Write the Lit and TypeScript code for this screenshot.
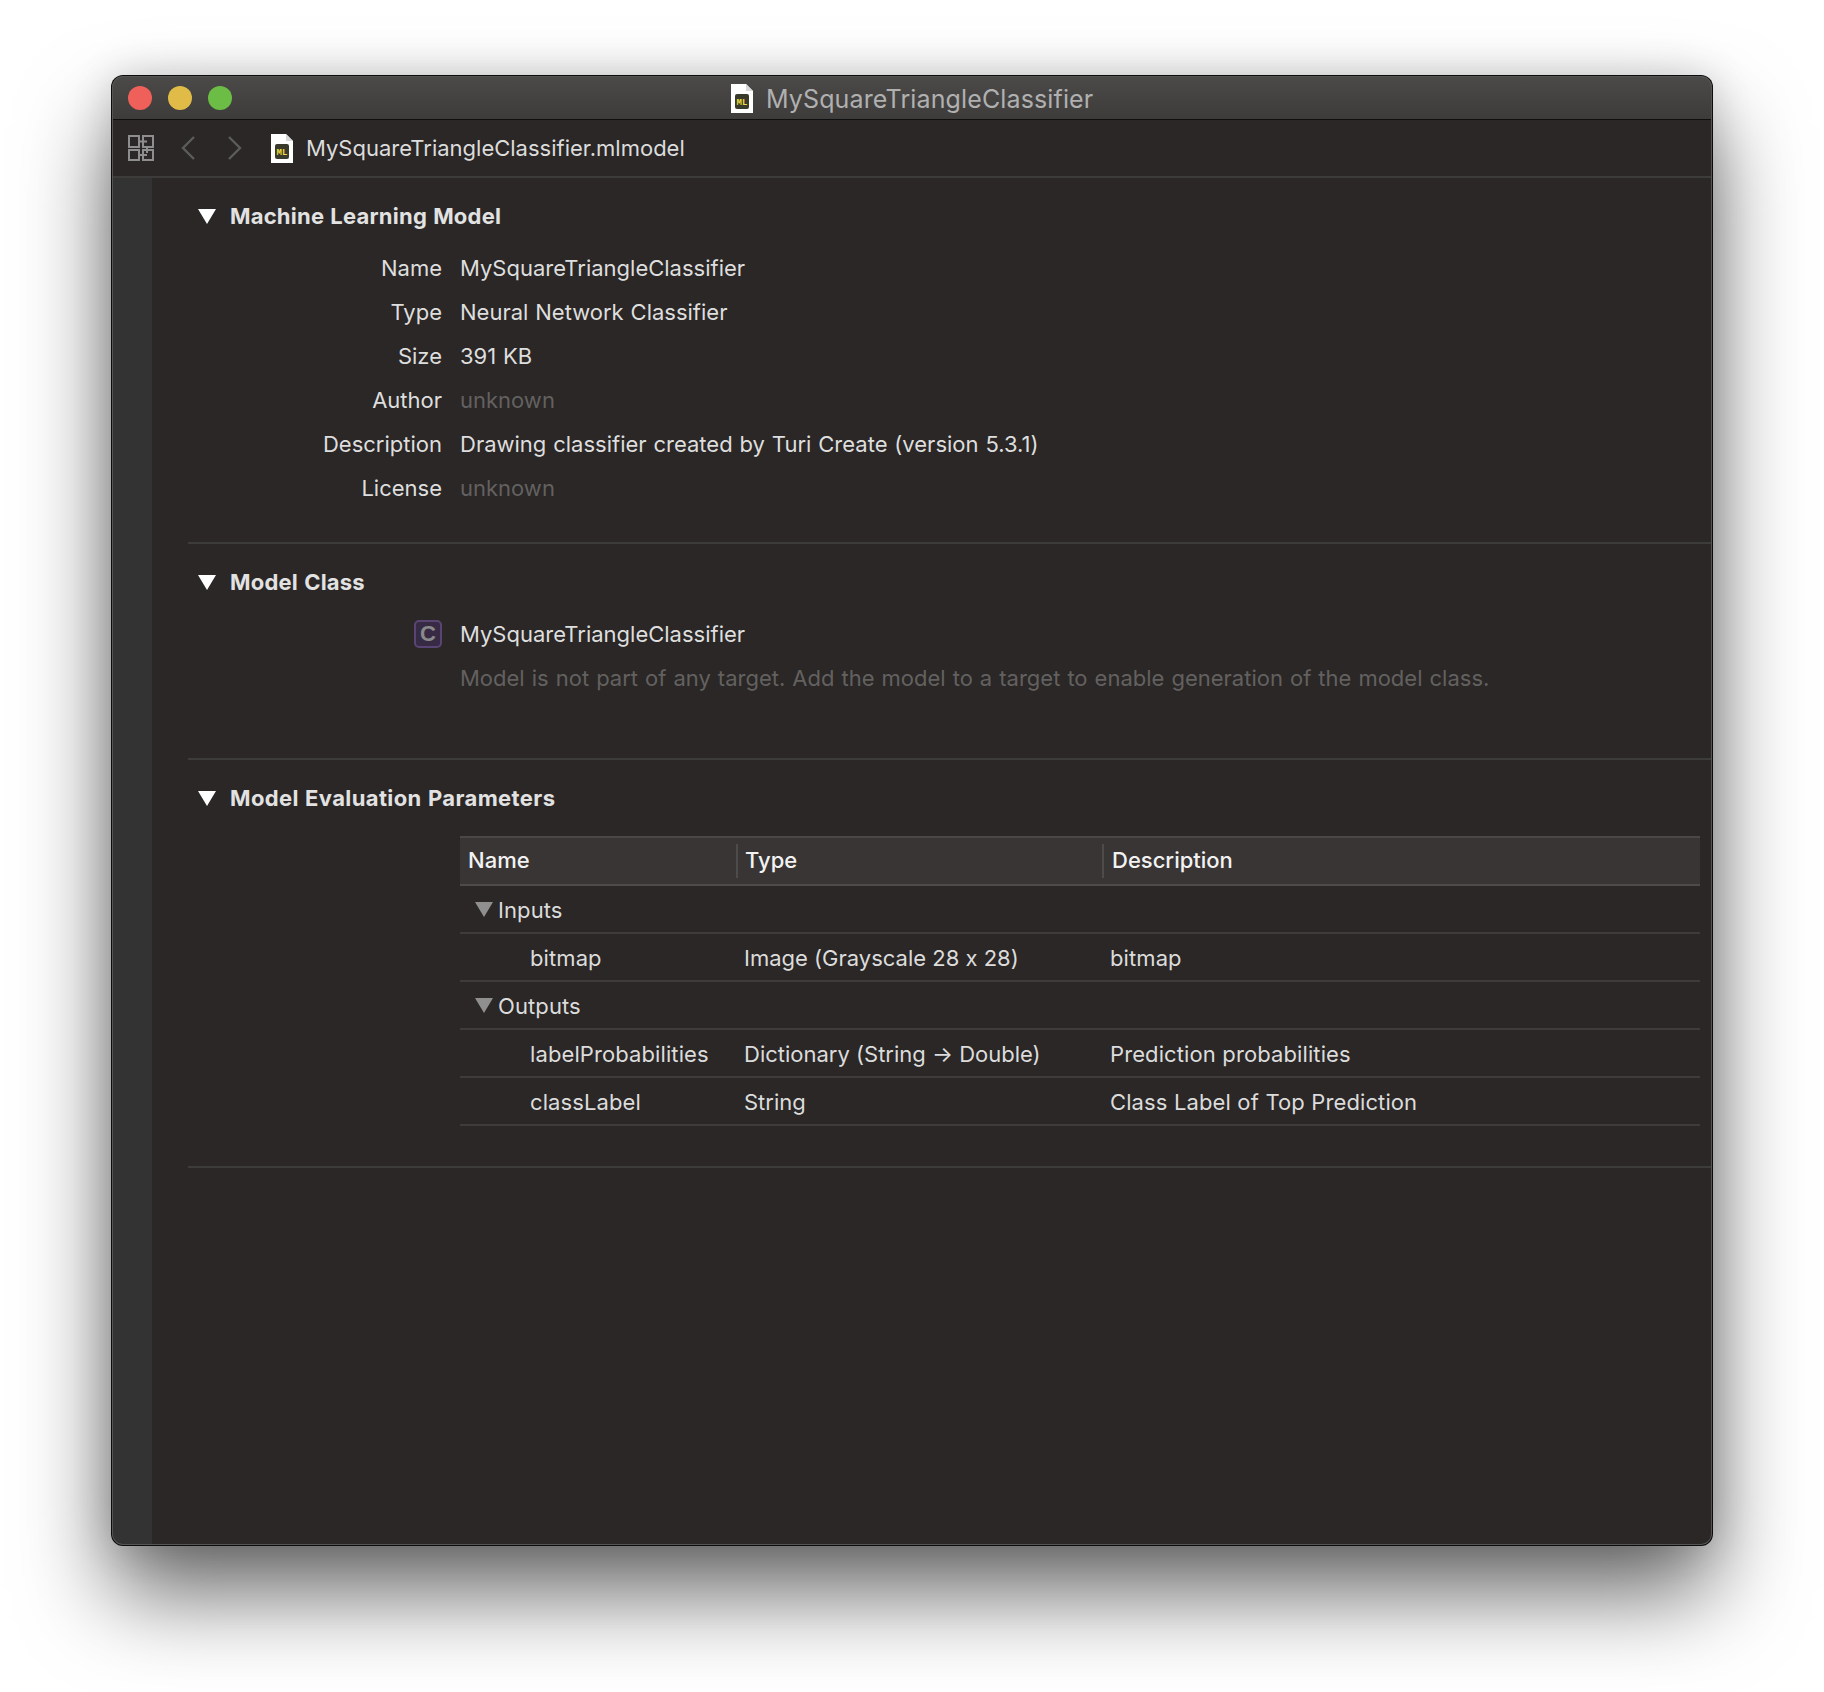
import { LitElement, html, css } from "lit";
import { customElement } from "lit/decorators.js";

const fileIcon = () => html`<svg class="file" width="22" height="29" viewBox="0 0 22 29">
  <path d="M0 0H15L22 7V29H0Z" fill="#fff"/>
  <path d="M15 0L22 7H15Z" fill="#d8d8d8"/>
  <rect x="4" y="10" width="14" height="15" rx="2" fill="#3a3a2c"/>
  <text x="11" y="20.8" text-anchor="middle" font-family="Liberation Mono, monospace" font-size="9" font-weight="700" fill="#f0dc3a">ML</text>
</svg>`;

const tri = () => html`<svg width="18" height="15" viewBox="0 0 18 15"><path d="M0 0H18L9 15Z" /></svg>`;

@customElement("app-root")
export class AppRoot extends LitElement {
  static styles = css`
    :host { display: block; height: 1692px; background: #fff; overflow: hidden; font-family: Inter, "Noto Sans", sans-serif; font-feature-settings: "calt" 0; word-spacing: .7px; padding: 76px 112px 0; box-sizing: border-box; }
    .window { height: 1469px; border-radius: 11px; background: #2a2726; box-shadow: 0 0 0 1px #0c0c0c, 0 48px 90px rgba(0,0,0,.6), 0 0 40px rgba(0,0,0,.16); display: flex; flex-direction: column; overflow: hidden; position: relative; }
    .window::after { content: ""; position: absolute; inset: 0; border-radius: 11px; box-shadow: inset 0 0 0 1px #555; pointer-events: none; }
    .title { height: 44px; flex: none; box-sizing: border-box; background: linear-gradient(#4b4a49, #3d3c3b); border-bottom: 1px solid #0f0f0f; display: flex; align-items: center; position: relative; }
    .lights { display: flex; gap: 16px; padding-left: 16px; }
    .lights i { width: 24px; height: 24px; border-radius: 50%; display: block; }
    .r { background: #ee6059; } .y { background: #e0bb47; } .g { background: #6cbd45; }
    .title-c { position: absolute; left: 619px; top: 7px; display: flex; align-items: center; gap: 13px; color: #b0b0b0; font-size: 25px; line-height: 29px; letter-spacing: .13px; }
    .title-c span { padding-top: 2px; }
    .toolbar { height: 58px; flex: none; border-bottom: 2px solid #3e3c3b; display: flex; align-items: center; color: #dcdcdc; font-size: 22px; box-sizing: border-box; padding-left: 16px; }
    .nav { margin-left: 27px; }
    .nav2 { margin-left: 33px; }
    .file { flex: none; }
    .toolbar .file { margin-left: 29px; margin-right: 13px; }
    .body { flex: 1; display: flex; }
    .strip { width: 40px; background: #323332; flex: none; }
    .content { flex: 1; padding-left: 36px; }
    section { border-bottom: 2px solid #3e3c3b; box-sizing: border-box; padding-top: 19px; }
    .s1 { height: 366px; } .s2 { height: 216px; } .s3 { height: 408px; }
    .head { height: 38px; display: flex; align-items: center; color: #e2e2e2; font-weight: 700; font-size: 22px; letter-spacing: .22px; padding-left: 10px; gap: 14px; }
    .s3 .head { letter-spacing: .38px; }
    .head svg { fill: #fff; flex: none; }
    .rows { margin-top: 11px; display: grid; grid-template-columns: 254px 1fr; column-gap: 18px; grid-auto-rows: 44px; align-items: center; font-size: 22px; color: #dedede; }
    .lab { text-align: right; }
    .mute { color: #636160; }
    .cls { margin-top: 11px; margin-left: 272px; font-size: 22px; color: #dedede; display: grid; grid-auto-rows: 44px; align-items: center; }
    .cls .mute { word-spacing: .85px; }
    .cls-row { position: relative; }
    .cbadge { position: absolute; left: -46px; top: 50%; margin-top: -14px; width: 28px; height: 28px; box-sizing: border-box; border: 2px solid #5a4474; border-radius: 5px; background: #362a45; color: #8a8a8a; font: 700 22px/24px "Liberation Sans", sans-serif; text-align: center; }
    .table { margin: 19px 12px 0 272px; font-size: 22px; color: #dcdcdc; }
    .thead { display: grid; grid-template-columns: 276px 366px 1fr; height: 50px; box-sizing: border-box; background: #383534; border-top: 2px solid #4a4847; border-bottom: 2px solid #4e4c4b; align-items: center; color: #f2f2f2; font-weight: 500; }
    .thead div { padding-left: 8px; height: 34px; line-height: 32px; box-sizing: border-box; }
    .thead div + div { border-left: 2px solid #4e4c4b; padding-left: 7px; }
    .thead div + div + div { padding-left: 8px; }
    .row { display: grid; grid-template-columns: 277px 366px 1fr; height: 48px; box-sizing: border-box; border-bottom: 2px solid #3e3c3b; align-items: center; letter-spacing: .1px; word-spacing: .2px; padding-top: 1px; }
    .row .n { padding-left: 70px; }
    .row .t { padding-left: 7px; letter-spacing: 0; word-spacing: 0; }
    .row .d { padding-left: 7px; }
    .group { display: flex; align-items: center; padding-left: 15px; gap: 5px; }
    .group svg { fill: #8f8f8f; flex: none; }
  `;

  render() {
    return html`
      <div class="window">
        <div class="title">
          <div class="lights"><i class="r"></i><i class="y"></i><i class="g"></i></div>
          <div class="title-c">${fileIcon()}<span>MySquareTriangleClassifier</span></div>
        </div>
        <div class="toolbar">
          <svg width="26" height="26" viewBox="0 0 26 26" fill="none" stroke="#8e8e8e" stroke-width="2"><path d="M1 1H11V12H1ZM15 1H25V12H15ZM1 15H11V25H1ZM15 15H25V25H15Z"/><path d="M11 6.5H19M11 20H19M19 12V18"/></svg>
          <svg class="nav" width="14" height="24" viewBox="0 0 14 24" fill="none" stroke="#5c5c5c" stroke-width="2.4"><path d="M13 1L2 12L13 23"/></svg>
          <svg class="nav2" width="14" height="24" viewBox="0 0 14 24" fill="none" stroke="#5c5c5c" stroke-width="2.4"><path d="M1 1L12 12L1 23"/></svg>
          ${fileIcon()}<span>MySquareTriangleClassifier.mlmodel</span>
        </div>
        <div class="body">
          <div class="strip"></div>
          <div class="content">
            <section class="s1">
              <div class="head">${tri()}<span>Machine Learning Model</span></div>
              <div class="rows">
                <div class="lab">Name</div><div>MySquareTriangleClassifier</div>
                <div class="lab">Type</div><div>Neural Network Classifier</div>
                <div class="lab">Size</div><div>391 KB</div>
                <div class="lab">Author</div><div class="mute">unknown</div>
                <div class="lab">Description</div><div>Drawing classifier created by Turi Create (version 5.3.1)</div>
                <div class="lab">License</div><div class="mute">unknown</div>
              </div>
            </section>
            <section class="s2">
              <div class="head">${tri()}<span>Model Class</span></div>
              <div class="cls">
                <div class="cls-row"><span class="cbadge">C</span>MySquareTriangleClassifier</div>
                <div class="mute">Model is not part of any target. Add the model to a target to enable generation of the model class.</div>
              </div>
            </section>
            <section class="s3">
              <div class="head">${tri()}<span>Model Evaluation Parameters</span></div>
              <div class="table">
                <div class="thead"><div>Name</div><div>Type</div><div>Description</div></div>
                <div class="row"><div class="group">${tri()}<span>Inputs</span></div></div>
                <div class="row"><div class="n">bitmap</div><div class="t">Image (Grayscale 28 x 28)</div><div class="d">bitmap</div></div>
                <div class="row"><div class="group">${tri()}<span>Outputs</span></div></div>
                <div class="row"><div class="n">labelProbabilities</div><div class="t">Dictionary (String → Double)</div><div class="d">Prediction probabilities</div></div>
                <div class="row"><div class="n">classLabel</div><div class="t">String</div><div class="d">Class Label of Top Prediction</div></div>
              </div>
            </section>
          </div>
        </div>
      </div>
    `;
  }
}
